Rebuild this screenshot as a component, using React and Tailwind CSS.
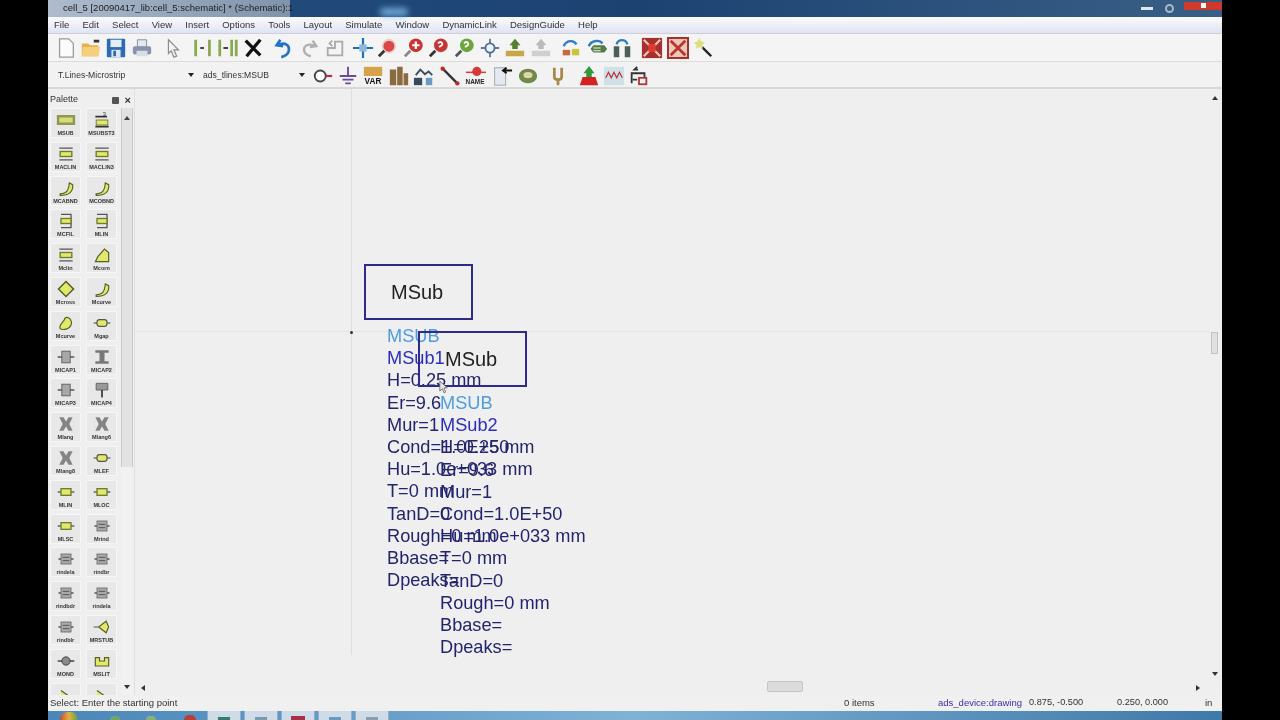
import React from "react";

const menus = ["File","Edit","Select","View","Insert","Options","Tools","Layout","Simulate","Window","DynamicLink","DesignGuide","Help"];

const Svg = ({ children, className = "w-[24px] h-[24px]" }) => (
  <svg viewBox="0 0 24 24" className={className}>{children}</svg>
);

// top toolbar
const tb1 = {
  newDoc: <path d="M5 2h10l5 5v15H5z" fill="#fbfbfb" stroke="#9a9a9a" strokeWidth="1.4" />,
  open: <g><path d="M2 7h7l2 2h9v12H2z" fill="#e8b04a" /><path d="M3 11h19l-2 10H2z" fill="#f4cf7c" /><rect x="15" y="3" width="6" height="3" fill="#333" /></g>,
  save: <g><rect x="2" y="2" width="20" height="20" rx="1" fill="#2d6cb4" /><rect x="6" y="3" width="12" height="8" fill="#e8eef6" /><rect x="7" y="14" width="10" height="8" fill="#dfe6ee" /><rect x="9" y="15" width="3" height="6" fill="#2d6cb4" /></g>,
  print: <g><path d="M7 3h10v8H7z" fill="#e6e8ee" stroke="#7e8aa0" /><rect x="2" y="10" width="20" height="9" rx="2" fill="#8793ab" /><rect x="6" y="15" width="12" height="6" fill="#d8dce6" /></g>,
  cursor: <path d="M7 3l11 11h-5l3 7-3 1-3-7-3 3z" fill="#f4f4f4" stroke="#8c8c8c" strokeWidth="1.3" />,
  wire1: <g stroke="#8aa84e" strokeWidth="3"><path d="M4 3v18M19 3v18" /><path d="M9 12h4" stroke="#333" strokeWidth="2" /></g>,
  wire2: <g stroke="#8aa84e" strokeWidth="3"><path d="M3 3v18M16 3v18M21 3v18" /><path d="M7 12h5" stroke="#333" strokeWidth="2" /></g>,
  del: <path d="M4 4l16 16M20 3L5 21" stroke="#111" strokeWidth="3.6" />,
  undo: <path d="M8 3L4 9l7 1M5 9c8-4 14 0 12 7-1 3-4 5-8 6" fill="none" stroke="#2474c8" strokeWidth="3" />,
  redo: <path d="M16 4l4 6-7 1M19 10c-8-4-14 0-12 6 1 3 3 4 7 5" fill="none" stroke="#b0b0b0" strokeWidth="2.6" />,
  rot: <g fill="none" stroke="#aaa" strokeWidth="2"><path d="M4 20V12h8V5h8v15z" /><path d="M9 4l-3 3 3 3" /></g>,
  move: <g><path d="M12 1v22M1 12h22" stroke="#1f6fc0" strokeWidth="2.4" /><rect x="8" y="8" width="8" height="8" fill="#8cb8e0" /></g>,
  zoomA: <g><circle cx="13" cy="10" r="7" fill="#d84848" stroke="#e9d0d0" strokeWidth="2" /><path d="M8 15l-6 6" stroke="#333" strokeWidth="3" /></g>,
  zoomP: <g><circle cx="14" cy="9" r="7.5" fill="#c93434" /><path d="M14 5v8M10 9h8" stroke="#fff" strokeWidth="2.4" /><path d="M8 15l-6 6" stroke="#888" strokeWidth="3" /></g>,
  zoomB: <g><circle cx="14" cy="9" r="7.5" fill="#c93434" /><path d="M11 7c2-3 6-1 4 2l-3 2" stroke="#fff" strokeWidth="2" fill="none" /><path d="M8 15l-6 6" stroke="#333" strokeWidth="3" /></g>,
  zoomC: <g><circle cx="14" cy="9" r="7.5" fill="#6aa53e" /><path d="M11 7c2-3 6-1 4 2l-3 2" stroke="#fff" strokeWidth="2" fill="none" /><path d="M8 15l-6 6" stroke="#555" strokeWidth="3" /></g>,
  target: <g><path d="M12 2v20M2 12h20" stroke="#5b7aa8" strokeWidth="2" /><circle cx="12" cy="12" r="5" fill="#eef3fa" stroke="#4a6c9e" strokeWidth="2" /></g>,
  push: <g><path d="M12 2l6 7h-3v4H9V9H6z" fill="#55802f" /><path d="M2 15h20v6H2z" fill="#c9a64a" /></g>,
  pop: <g><path d="M12 2l6 7h-3v4H9V9H6z" fill="#bbb" /><path d="M2 15h20v6H2z" fill="#cfcfcf" /></g>,
  link1: <g><path d="M4 10c3-7 11-7 14-2" stroke="#2d7cc8" strokeWidth="2.6" fill="none" /><path d="M3 14h8v6H3z" fill="#c66a3a" /><path d="M13 13h8v7h-8z" fill="#c8c43c" /></g>,
  link2: <g><path d="M3 10c3-7 12-7 15-3" stroke="#2d7cc8" strokeWidth="2.6" fill="none" /><path d="M8 9h12l3 4-3 4H8l-3-4z" fill="#567a44" /><path d="M8 12h8M8 15h8" stroke="#fff" /></g>,
  link3: <g><path d="M6 8c2-6 10-6 12 0" stroke="#2d7cc8" strokeWidth="2.4" fill="none" /><path d="M3 10h6v12H3zM15 10h6v12h-6z" fill="#4b5f58" /></g>,
  redA: <g><rect x="1" y="1" width="22" height="22" fill="#a92e2e" /><path d="M3 3l18 18M21 3L3 21" stroke="#efc9b8" strokeWidth="2.4" /><rect x="8" y="8" width="8" height="8" fill="#e03a2a" /></g>,
  redB: <g><rect x="1" y="1" width="22" height="22" fill="#e9c9b9" stroke="#a92e2e" strokeWidth="2.4" /><path d="M4 4l16 16M20 4L4 20" stroke="#b8352c" strokeWidth="3" /></g>,
  wand: <g><path d="M11 11l10 10" stroke="#222" strokeWidth="2.6" /><path d="M8 1l2 4 4 1-3 3 1 4-4-2-4 2 1-4-3-3 4-1z" fill="#dede7a" /></g>,
};

// second toolbar
const tb2 = {
  port: <g fill="none" stroke="#444" strokeWidth="2"><circle cx="9" cy="12" r="6" fill="#fff" /><path d="M15 12h7" stroke="#b0305a" strokeWidth="2.4" /></g>,
  gnd: <path d="M12 2v10M3 12h18M6 16h12M9 20h6" stroke="#6a4a9a" strokeWidth="2" />,
  var: <g><rect x="2" y="2" width="20" height="10" fill="#d8a24a" /><text x="12" y="21" textAnchor="middle" fontFamily="Liberation Sans, sans-serif" fontWeight="700" fontSize="9" fill="#111">VAR</text></g>,
  bld: <path d="M2 22V5h7v17zM10 22V2h6v20zM17 22V9h5v13z" fill="#8a6a40" />,
  probe: <g fill="none" stroke="#3a4a5e" strokeWidth="2"><path d="M3 11l5-6 5 5 4-3 4 4" /><rect x="2" y="15" width="7" height="6" fill="#3a4a5e" /><rect x="14" y="14" width="7" height="8" fill="#6a9ac0" stroke="none" /></g>,
  line: <g><path d="M4 4l16 16" stroke="#333" strokeWidth="2.6" /><circle cx="4" cy="4" r="2.4" fill="#c62828" /><circle cx="20" cy="20" r="2.4" fill="#c62828" /></g>,
  name: <g><circle cx="14" cy="7" r="5" fill="#d83a3a" /><path d="M2 8h22" stroke="#d83a3a" strokeWidth="1.6" /><text x="12" y="21" textAnchor="middle" fontFamily="Liberation Sans, sans-serif" fontWeight="700" fontSize="7" fill="#222">NAME</text></g>,
  doc: <g><rect x="4" y="3" width="12" height="19" fill="#e4e8f0" stroke="#9aa4b4" /><path d="M23 6H14M17 3l-4 3 4 3" stroke="#111" strokeWidth="2" fill="none" /></g>,
  gear: <g><ellipse cx="12" cy="12" rx="10" ry="8" fill="#6f8a4a" /><ellipse cx="12" cy="11" rx="5" ry="3.5" fill="#e0d6a8" /></g>,
  fork: <g><path d="M8 3v10c0 2 2 3 4 3s4-1 4-3V3" fill="none" stroke="#a88848" strokeWidth="3" /><path d="M12 15v7" stroke="#a88848" strokeWidth="3" /></g>,
  arrow: <g><path d="M12 1l6 8h-3v4H9V9H6z" fill="#2e9a3c" /><path d="M5 13h14l3 9H2z" fill="#d42222" /></g>,
  wave: <g><rect x="1" y="2" width="22" height="20" fill="#cfe0e6" /><path d="M3 14l3-6 3 6 3-6 3 6 3-6 3 6" stroke="#c03040" strokeWidth="1.4" fill="none" /></g>,
  net: <g fill="none" stroke="#333" strokeWidth="2"><path d="M4 20V9h14v5" /><path d="M11 5H7l3-3M5 16h5" /><rect x="12" y="14" width="8" height="7" stroke="#b03a3a" /></g>,
};

// palette drawings
const Yellow = "#e2e86a";
const pal = {
  box: <g><rect x="1" y="6" width="22" height="12" fill="#8f9a50" /><rect x="4" y="9" width="16" height="6" fill="#d5dc7a" /></g>,
  st3: <g><path d="M4 8h14M4 20h16" stroke="#333" strokeWidth="2" /><rect x="5" y="12" width="14" height="6" fill={Yellow} stroke="#66702a" /><text x="13" y="7" fontSize="7" fill="#333" fontFamily="Liberation Sans, sans-serif">3</text></g>,
  pair: <g stroke="#555" strokeWidth="1.6"><path d="M4 5h16M4 19h16" /><rect x="5" y="9" width="14" height="6" fill={Yellow} stroke="#707a30" /></g>,
  curve: <path d="M5 19c8 0 10-4 11-13l4 2c1 8-4 13-15 13z" fill={Yellow} stroke="#55602a" strokeWidth="1.4" />,
  tee: <g stroke="#555" strokeWidth="1.6"><path d="M6 4h12v16H6" fill="none" /><rect x="6" y="9" width="12" height="6" fill={Yellow} stroke="#707a30" /></g>,
  corner: <path d="M4 20l3-6 8-9 5 4v11z" fill={Yellow} stroke="#55602a" strokeWidth="1.4" />,
  diamond: <path d="M12 3l9 9-9 9-9-9z" fill={Yellow} stroke="#55602a" strokeWidth="1.8" />,
  bean: <path d="M5 19c-2-6 4-7 6-13 2-2 6 0 7 3 2 4-1 9-5 10-3 1-6 1-8 0z" fill={Yellow} stroke="#55602a" strokeWidth="1.4" />,
  gap: <g stroke="#555" strokeWidth="1.4"><path d="M2 12h20" /><rect x="6" y="8" width="12" height="8" rx="3" fill={Yellow} /></g>,
  cap: <g><path d="M2 12h20" stroke="#444" strokeWidth="1.6" /><rect x="7" y="5" width="10" height="14" fill="#a8a8a8" stroke="#555" /></g>,
  capH: <g fill="#777"><path d="M4 4h16v3h-5v10h5v3H4v-3h5V7H4z" /></g>,
  capV: <g><path d="M5 4h14v8H5z" fill="#999" stroke="#555" /><path d="M12 12v9" stroke="#333" strokeWidth="2" /></g>,
  lang: <path d="M4 4h5l3 5 3-5h5l-4 8 4 8h-5l-3-5-3 5H4l4-8z" fill="#858585" />,
  lin: <g stroke="#555" strokeWidth="1.6"><path d="M2 12h20" /><rect x="6" y="8" width="12" height="8" fill={Yellow} stroke="#707a30" /></g>,
  rind: <g><path d="M3 12h18" stroke="#444" strokeWidth="1.6" /><rect x="6" y="6" width="12" height="12" fill="#aaa" stroke="#666" /><path d="M8 10h8M8 14h8" stroke="#444" /></g>,
  stub: <path d="M2 12h6l9-7 3 7-3 7-9-7" fill={Yellow} stroke="#55602a" strokeWidth="1.4" />,
  mond: <g><path d="M2 12h20" stroke="#333" strokeWidth="1.6" /><circle cx="12" cy="12" r="5" fill="#8a8a8a" stroke="#333" /></g>,
  slit: <path d="M4 8h5v4h6V8h5v10H4z" fill={Yellow} stroke="#55602a" strokeWidth="1.4" />,
  tail: <path d="M6 3l10 7 4 2-4 3H6v6" fill={Yellow} stroke="#55602a" strokeWidth="1.4" />,
};

const palette = [
  ["box","MSUB"],["st3","MSUBST3"],["pair","MACLIN"],["pair","MACLIN3"],["curve","MCABND"],["curve","MCOBND"],
  ["tee","MCFIL"],["tee","MLIN"],["pair","Mclin"],["corner","Mcorn"],["diamond","Mcross"],["curve","Mcurve"],
  ["bean","Mcurve"],["gap","Mgap"],["cap","MICAP1"],["capH","MICAP2"],["cap","MICAP3"],["capV","MICAP4"],
  ["lang","Mlang"],["lang","Mlang6"],["lang","Mlang8"],["gap","MLEF"],["lin","MLIN"],["lin","MLOC"],
  ["lin","MLSC"],["rind","Mrind"],["rind","rindela"],["rind","rindbr"],["rind","rindbdr"],["rind","rindela"],
  ["rind","rindblr"],["stub","MRSTUB"],["mond","MOND"],["slit","MSLIT"],["tail",""],["tail",""],
];

const col1 = [
  ["MSUB", "text-[#4f9be2]"], ["MSub1", "text-[#2c2cc0]"], ["H=0.25 mm"], ["Er=9.6"], ["Mur=1"], ["Cond=1.0E+50"],
  ["Hu=1.0e+033 mm"], ["T=0 mm"], ["TanD=0"], ["Rough=0 mm"], ["Bbase="], ["Dpeaks="],
];
const col2 = [
  ["MSUB", "text-[#4f9be2]"], ["MSub2", "text-[#2c2cc0]"], ["H=0.25 mm"], ["Er=9.6"], ["Mur=1"], ["Cond=1.0E+50"],
  ["Hu=1.0e+033 mm"], ["T=0 mm"], ["TanD=0"], ["Rough=0 mm"], ["Bbase="], ["Dpeaks="],
];

const Params = ({ rows, className }) => (
  <div className={"absolute flex flex-col text-[18.2px] leading-[22.2px] whitespace-nowrap text-[#23236f] " + className}>
    {rows.map(([t, c], i) => <span key={i} className={c}>{t}</span>)}
  </div>
);

const Tool = ({ icon }) => (
  <div className="w-[25.4px] h-[24px] flex items-center justify-center shrink-0"><Svg className="w-[22px] h-[22px]">{icon}</Svg></div>
);

const Group = ({ names, set, className = "" }) => (
  <div className={"flex " + className}>{names.map((n, i) => <Tool key={i} icon={set[n]} />)}</div>
);

const Tile = ({ children }) => (
  <div className="w-[34px] h-[9px] bg-[#cfdce8] border-x border-[#8fb0cc] flex items-end justify-center">{children}</div>
);

export default function App() {
  return (
    <div className="w-[1280px] h-[720px] bg-black flex justify-center overflow-hidden" style={{ fontFamily: "'Liberation Sans', sans-serif" }}>
      <div className="w-[1174px] h-[720px] mr-[10px] flex flex-col bg-[#efefef] blur-[0.7px] text-[#333]">
        {/* title bar */}
        <div className="h-[17px] flex items-center bg-gradient-to-r from-[#24507f] via-[#1c4272] to-[#3a5f86] shrink-0">
          <div className="w-[242px] h-full flex items-center pl-[15px] text-[9.5px] bg-gradient-to-r from-[#aebccd] to-[#7f93ab] text-[#222] whitespace-nowrap">cell_5 [20090417_lib:cell_5:schematic] * (Schematic):1</div>
          <div className="ml-[90px] w-[28px] h-[8px] mt-[6px] rounded-full bg-[#6fa6d8] blur-[3px]" />
          <div className="ml-auto flex items-center h-full">
            <div className="w-[12px] h-[3px] bg-[#dfe6ee] mr-[12px]" />
            <div className="w-[9px] h-[9px] rounded-full border-2 border-[#a9b8c6] mr-[10px]" />
            <div className="w-[38px] h-[8px] bg-[#cc3a2c] mb-[6px] flex items-center justify-center"><div className="w-[5px] h-[5px] bg-white" /></div>
          </div>
        </div>
        {/* menu */}
        <div className="h-[17px] flex items-center gap-[13.2px] pl-[6px] text-[9.5px] bg-gradient-to-b from-[#fbfbfd] to-[#dfe3f4] border-b border-[#cfcfd8] shrink-0">
          {menus.map((m) => <span key={m}>{m}</span>)}
        </div>
        {/* toolbar 1 */}
        <div className="h-[28px] flex items-center pl-[5px] bg-[#f4f4f4] border-b border-[#dcdcdc] shrink-0">
          <Group set={tb1} names={["newDoc","open","save","print"]} />
          <Group set={tb1} className="ml-[6px]" names={["cursor"]} />
          <Group set={tb1} className="ml-[4px]" names={["wire1","wire2","del"]} />
          <Group set={tb1} className="ml-[5px]" names={["undo","redo","rot"]} />
          <Group set={tb1} className="ml-[3px]" names={["move","zoomA","zoomP","zoomB","zoomC","target","push","pop"]} />
          <Group set={tb1} className="ml-[5px]" names={["link1","link2","link3"]} />
          <Group set={tb1} className="ml-[5px]" names={["redA","redB","wand"]} />
        </div>
        {/* toolbar 2 */}
        <div className="h-[27px] flex items-center pl-[10px] pt-[2px] bg-[#f2f2f2] border-b-2 border-[#d8d8d8] shrink-0 text-[8.6px]">
          <div className="w-[136px] flex items-center justify-between">
            <span>T.Lines-Microstrip</span>
            <span className="w-0 h-0 border-x-[3px] border-x-transparent border-t-[4px] border-t-[#222]" />
          </div>
          <div className="w-[102px] ml-[9px] flex items-center justify-between">
            <span>ads_tlines:MSUB</span>
            <span className="w-0 h-0 border-x-[3px] border-x-transparent border-t-[4px] border-t-[#222]" />
          </div>
          <Group set={tb2} className="ml-[5px]" names={["port","gnd","var","bld","probe","line","name"]} />
          <Group set={tb2} className="ml-[2px]" names={["doc","gear"]} />
          <Group set={tb2} className="ml-[5px]" names={["fork"]} />
          <Group set={tb2} className="ml-[5px]" names={["arrow","wave","net"]} />
        </div>
        {/* body */}
        <div className="flex-1 flex min-h-0">
          <aside className="w-[87px] flex flex-col border-r border-[#e0e0e0] shrink-0">
            <div className="h-[19px] flex items-center justify-between pt-[3px] pl-[2px] pr-[3px] text-[9px] shrink-0">
              <span>Palette</span>
              <span className="flex items-center gap-[6px] text-[11px] leading-none font-bold"><span className="w-[7px] h-[7px] bg-[#555] rounded-[1px]" /><span>×</span></span>
            </div>
            <div className="flex-1 flex min-h-0">
              <div className="w-[73px] h-[587px] overflow-hidden grid grid-cols-[31px_31px] content-start gap-x-[5px] gap-y-[3.8px] pl-[2px]">
                {palette.map(([k, l], i) => (
                  <div key={i} className="h-[30px] bg-[#e8e8e8] border border-[#f6f6f6] flex flex-col items-center justify-center overflow-hidden">
                    <Svg className="w-[20px] h-[20px] shrink-0">{pal[k]}</Svg>
                    <span className="text-[5.5px] leading-[6px] font-bold text-[#333] whitespace-nowrap">{l}</span>
                  </div>
                ))}
              </div>
              <div className="relative w-[12px] h-[587px] flex flex-col">
                <div className="h-[359px] bg-[#e2e2e2] border-x border-[#c9c9c9]" />
                <div className="flex-1 bg-[#f1f1f1]" />
                <div className="absolute left-[3px] top-[8px] w-0 h-0 border-x-[3px] border-x-transparent border-b-[4px] border-b-[#444]" />
                <div className="absolute left-[3px] top-[577px] w-0 h-0 border-x-[3px] border-x-transparent border-t-[4px] border-t-[#333]" />
              </div>
            </div>
          </aside>
          {/* schematic canvas */}
          <main className="relative flex-1 bg-[#efefef]">
            <div className="absolute left-[216px] top-0 w-px h-[566px] bg-[#dedede]" />
            <div className="absolute left-0 top-[242px] w-[1075px] h-px bg-[#e4e4e4]" />
            <div className="absolute left-[215px] top-[242px] w-[3px] h-[3px] rounded-full bg-[#333]" />
            <div className="absolute left-[229px] top-[175px] w-[109px] h-[56px] border-2 border-[#2f2a8c] flex items-center pl-[25px] text-[20px] text-[#222]">MSub</div>
            <Params rows={col1} className="left-[252px] top-[236px]" />
            <div className="absolute left-[283px] top-[242px] w-[109px] h-[56px] border-2 border-[#2f2a8c] flex items-center pl-[25px] text-[20px] text-[#222]">MSub</div>
            <Params rows={col2} className="left-[305px] top-[303px]" />
            <svg viewBox="0 0 12 16" className="absolute left-[304px] top-[291px] w-[10px] h-[14px]"><path d="M1 1v12l3-3 2 5 2-1-2-5h4z" fill="#e8e8e8" stroke="#666" /></svg>
            <div className="absolute right-[4px] top-[7px] w-0 h-0 border-x-[3px] border-x-transparent border-b-[4px] border-b-[#333]" />
            <div className="absolute right-[4px] top-[583px] w-0 h-0 border-x-[3px] border-x-transparent border-t-[4px] border-t-[#333]" />
            <div className="absolute right-[4px] top-[243px] w-[7px] h-[22px] bg-[#e0e0e0] border border-[#c4c4c4]" />
            <div className="absolute left-[632px] top-[592px] w-[36px] h-[11px] bg-[#dcdcdc] border border-[#c4c4c4] rounded-[2px]" />
            <div className="absolute left-[6px] top-[596px] w-0 h-0 border-y-[3px] border-y-transparent border-r-[4px] border-r-[#333]" />
            <div className="absolute right-[22px] top-[596px] w-0 h-0 border-y-[3px] border-y-transparent border-l-[4px] border-l-[#333]" />
          </main>
        </div>
        {/* status bar */}
        <div className="h-[16px] flex items-center bg-[#f0f0f0] text-[9.5px] shrink-0 relative">
          <span className="ml-[2px] w-[794px] whitespace-nowrap">Select: Enter the starting point</span>
          <span className="w-[94px]">0 items</span>
          <span className="w-[91px] text-[#3a2fa8] whitespace-nowrap">ads_device:drawing</span>
          <span className="w-[88px] text-[9.2px]">0.875, -0.500</span>
          <span className="w-[88px] text-[9.2px]">0.250, 0.000</span>
          <span>in</span>
        </div>
        {/* taskbar */}
        <div className="h-[9px] flex items-end bg-gradient-to-r from-[#4a86b8] via-[#7fb2d6] to-[#3f79a8] shrink-0 overflow-hidden">
          <div className="ml-[12px] w-[18px] h-[8px] rounded-t-full bg-gradient-to-r from-[#c8483a] via-[#e0b040] to-[#5aa04a]" />
          <div className="ml-[32px] w-[10px] h-[4px] rounded-t-full bg-[#6fa56a]" />
          <div className="ml-[26px] w-[10px] h-[4px] rounded-t-full bg-[#8ab07a]" />
          <div className="ml-[28px] w-[12px] h-[5px] rounded-t-full bg-[#b8403a]" />
          <div className="ml-[11px] flex gap-[3px]">
            <Tile><div className="w-[12px] h-[3px] bg-[#3a7a6a]" /></Tile>
            <Tile><div className="w-[12px] h-[3px] bg-[#7a9ab0]" /></Tile>
            <Tile><div className="w-[14px] h-[4px] bg-[#a8304a]" /></Tile>
            <Tile><div className="w-[12px] h-[3px] bg-[#6a9ac0]" /></Tile>
            <Tile><div className="w-[12px] h-[3px] bg-[#8aa0b0]" /></Tile>
          </div>
        </div>
      </div>
    </div>
  );
}
